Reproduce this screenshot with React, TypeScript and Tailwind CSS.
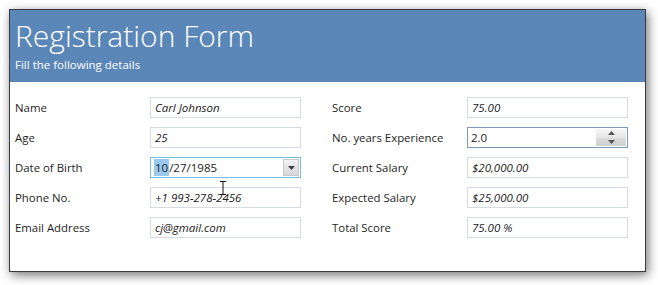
import React from "react";

const font = { fontFamily: '"Open Sans", "Noto Sans", sans-serif' };

function Field({ value, italic = true }: { value: string; italic?: boolean }) {
  return (
    <div className="h-[21px] w-full border border-[#d5dbe1] bg-white flex items-center pl-[4px]">
      <span className={`text-[11.5px] text-[#1a1a1a] ${italic ? "italic" : ""}`}>{value}</span>
    </div>
  );
}

function Row({ label, children }: { label: string; children: React.ReactNode }) {
  return (
    <div className="flex items-center h-[21px]">
      <div className="w-[135px] shrink-0 text-[11.4px] text-[#1e1e1e]">{label}</div>
      {children}
    </div>
  );
}

export default function App() {
  return (
    <div className="w-[658px] h-[285px] bg-white relative overflow-hidden" style={font}>
      <div className="absolute left-[9px] top-[9px] w-[637px] h-[263px] border border-[#3a3a3a] bg-white shadow-[2px_3px_10px_rgba(0,0,0,0.55)]">
        <div className="h-[72px] bg-[#5b87b8] pl-[5px] pt-[9px]">
          <div className="text-[30px] leading-[34px] font-light text-white">Registration Form</div>
          <div className="text-[11.5px] leading-[16px] text-white mt-[4px]">Fill the following details</div>
        </div>
        <div className="flex pt-[15px] pl-[5px]">
          <div className="flex flex-col gap-[9px] w-[286px]">
            <Row label="Name">
              <div className="w-[151px]"><Field value="Carl Johnson" /></div>
            </Row>
            <Row label="Age">
              <div className="w-[151px]"><Field value="25" /></div>
            </Row>
            <Row label="Date of Birth">
              <div className="w-[151px] h-[21px] border border-[#6fc0dc] bg-white flex items-center">
                <div className="flex-1 pl-[3px] text-[11.5px] text-[#1a1a1a] flex items-center">
                  <span className="bg-[#99c9ef] px-[1px]">10</span>
                  <span>/27/1985</span>
                </div>
                <div className="w-[16px] h-[17px] mr-[1px] bg-gradient-to-b from-[#f3f3f3] to-[#d6d6d6] border border-[#c9c9c9] flex items-center justify-center">
                  <svg width="7" height="4" viewBox="0 0 7 4"><path d="M0 0h7L3.5 4z" fill="#3c3c3c" /></svg>
                </div>
              </div>
            </Row>
            <Row label="Phone No.">
              <div className="w-[151px]"><Field value="+1 993-278-2456" /></div>
            </Row>
            <Row label="Email Address">
              <div className="w-[151px]"><Field value="cj@gmail.com" /></div>
            </Row>
          </div>
          <div className="flex flex-col gap-[9px] ml-[31px]">
            <Row label="Score">
              <div className="w-[161px]"><Field value="75.00" /></div>
            </Row>
            <Row label="No. years Experience">
              <div className="w-[161px] h-[21px] border border-[#7c98b6] bg-white flex items-center">
                <div className="flex-1 pl-[3px] text-[11.5px] text-[#1a1a1a]">2.0</div>
                <div className="w-[30px] h-[17px] mr-[1px] flex flex-col">
                  <div className="flex-1 bg-gradient-to-b from-[#f6f6f6] to-[#e4e4e4] flex items-center justify-center">
                    <svg width="7" height="4" viewBox="0 0 7 4"><path d="M0 4h7L3.5 0z" fill="#555" /></svg>
                  </div>
                  <div className="flex-1 bg-gradient-to-b from-[#dcdcdc] to-[#cfcfcf] flex items-center justify-center">
                    <svg width="7" height="4" viewBox="0 0 7 4"><path d="M0 0h7L3.5 4z" fill="#555" /></svg>
                  </div>
                </div>
              </div>
            </Row>
            <Row label="Current Salary">
              <div className="w-[161px]"><Field value="$20,000.00" /></div>
            </Row>
            <Row label="Expected Salary">
              <div className="w-[161px]"><Field value="$25,000.00" /></div>
            </Row>
            <Row label="Total Score">
              <div className="w-[161px]"><Field value="75.00 %" /></div>
            </Row>
          </div>
        </div>
      </div>
      <svg className="absolute left-[219px] top-[181px]" width="8" height="14" viewBox="0 0 8 14">
        <path d="M1 0.5h6M4 0.5v13M1 13.5h6" stroke="#111" strokeWidth="1" fill="none" />
      </svg>
    </div>
  );
}
